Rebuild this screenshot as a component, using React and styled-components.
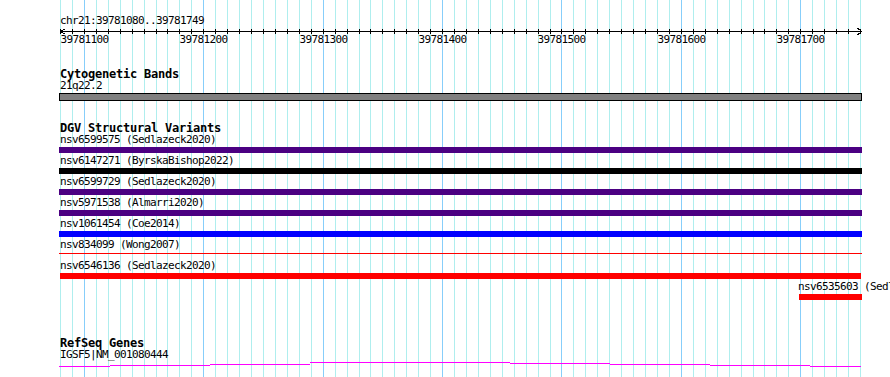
import React from 'react';
import styled, { createGlobalStyle } from 'styled-components';

const START = 39781080;
const END = 39781750;
const X0 = 60;
const X1 = 860;
const bpToX = (bp) => X0 + ((bp - START) * (X1 - X0)) / (END - START);

// one grid line every 10bp, darker every 100bp
const gridLines = [];
for (let bp = START; bp <= END; bp += 10) {
  gridLines.push({ x: Math.round(bpToX(bp)), major: bp % 100 === 0 });
}
const tickLabels = gridLines.filter((g) => g.major).map((g, i) => ({
  x: g.x,
  text: String(39781100 + i * 100),
}));

const variants = [
  { label: 'nsv6599575 (Sedlazeck2020)', color: '#4b0082' },
  { label: 'nsv6147271 (ByrskaBishop2022)', color: '#000000' },
  { label: 'nsv6599729 (Sedlazeck2020)', color: '#4b0082' },
  { label: 'nsv5971538 (Almarri2020)', color: '#4b0082' },
  { label: 'nsv1061454 (Coe2014)', color: '#0000ff' },
  { label: 'nsv834099 (Wong2007)', color: '#ff0000', thin: true },
  { label: 'nsv6546136 (Sedlazeck2020)', color: '#ff0000', x: 60, w: 801 },
  { label: 'nsv6535603 (Sedlazeck2020)', color: '#ff0000', x: 799, w: 63, textX: 798 },
];

// gene model wiggle: [from, to, row]
const geneSegments = [
  [59, 110, 5],
  [110, 210, 4],
  [210, 310, 3],
  [310, 510, 1],
  [510, 610, 2],
  [610, 710, 3],
  [710, 810, 4],
  [810, 861, 5],
];

const GlobalStyle = createGlobalStyle`
  html, body {
    margin: 0;
    padding: 0;
    background: #ffffff;
  }
`;

const Panel = styled.div`
  position: relative;
  width: 890px;
  height: 377px;
  overflow: hidden;
  background: #ffffff;
  color: #000;
  font-family: "DejaVu Sans Mono", "Liberation Mono", monospace;
  font-size: 11px;
  letter-spacing: -0.62px;
`;

const Grid = styled.svg`
  position: absolute;
  left: 0;
  top: 0;
`;

const Tracks = styled.div`
  position: relative;
  display: flex;
  flex-direction: column;
`;

const Text = styled.div`
  height: 12px;
  line-height: 12px;
  white-space: nowrap;
  padding-left: ${(p) => p.$x ?? 60}px;
  margin-top: ${(p) => p.$mt || 0}px;
`;

const Heading = styled(Text)`
  font-size: 12px;
  font-weight: bold;
  letter-spacing: -0.22px;
`;

const Axis = styled.svg`
  display: block;
`;

const TickRow = styled.div`
  position: relative;
  height: 12px;
  line-height: 12px;
`;

const TickLabel = styled.span`
  position: absolute;
  top: 0;
  transform: translateX(-50%);
  white-space: nowrap;
`;

const BandBar = styled.div`
  box-sizing: border-box;
  margin-top: 1px;
  margin-left: 59px;
  width: 803px;
  height: 8px;
  background: #808080;
  border: 1px solid #000;
`;

const VariantRow = styled.div`
  display: flex;
  flex-direction: column;
  height: 21px;
`;

const Bar = styled.div`
  margin-left: ${(p) => p.$x}px;
  width: ${(p) => p.$w}px;
  height: ${(p) => (p.$thin ? 1 : 6)}px;
  margin-top: ${(p) => (p.$thin ? 2 : 1)}px;
  background: ${(p) => p.$color};
`;

const Gene = styled.svg`
  display: block;
`;

export default function App() {
  return (
    <>
      <GlobalStyle />
      <Panel>
        <Grid width="890" height="377" shapeRendering="crispEdges">
          {gridLines.map((g) => (
            <rect
              key={g.x}
              x={g.x}
              y="0"
              width="1"
              height="377"
              fill={g.major ? '#87cefa' : '#afeeee'}
            />
          ))}
        </Grid>
        <Tracks>
          <Text $mt={15}>chr21:39781080..39781749</Text>
          <Axis width="890" height="8" shapeRendering="crispEdges">
            <rect x="60" y="4" width="802" height="1" fill="#000" />
            {gridLines.map((g) => (
              <rect key={g.x} x={g.x} y="2" width="1" height="5" fill="#000" />
            ))}
            <polyline points="64.5,2 60.5,4.5 64.5,7" fill="none" stroke="#000" strokeWidth="1" />
            <polyline points="857.5,1 861.5,4.5 857.5,8" fill="none" stroke="#000" strokeWidth="1" />
          </Axis>
          <TickRow style={{ marginTop: -1 }}>
            {tickLabels.map((t) => (
              <TickLabel key={t.text} style={{ left: t.x + 0.5 }}>
                {t.text}
              </TickLabel>
            ))}
          </TickRow>

          <Heading $mt={22}>Cytogenetic Bands</Heading>
          <Text>21q22.2</Text>
          <BandBar />

          <Heading $mt={21}>DGV Structural Variants</Heading>
          {variants.map((v) => (
            <VariantRow key={v.label}>
              <Text $x={v.textX}>{v.label}</Text>
              <Bar $x={v.x ?? 59} $w={v.w ?? 803} $color={v.color} $thin={v.thin} />
            </VariantRow>
          ))}

          <Heading $mt={35}>RefSeq Genes</Heading>
          <Text>IGSF5|NM_001080444</Text>
          <Gene width="890" height="7" shapeRendering="crispEdges">
            {geneSegments.map(([a, b, row]) => (
              <rect key={a} x={a} y={row} width={b - a} height="1" fill="#ff00ff" />
            ))}
          </Gene>
        </Tracks>
      </Panel>
    </>
  );
}
